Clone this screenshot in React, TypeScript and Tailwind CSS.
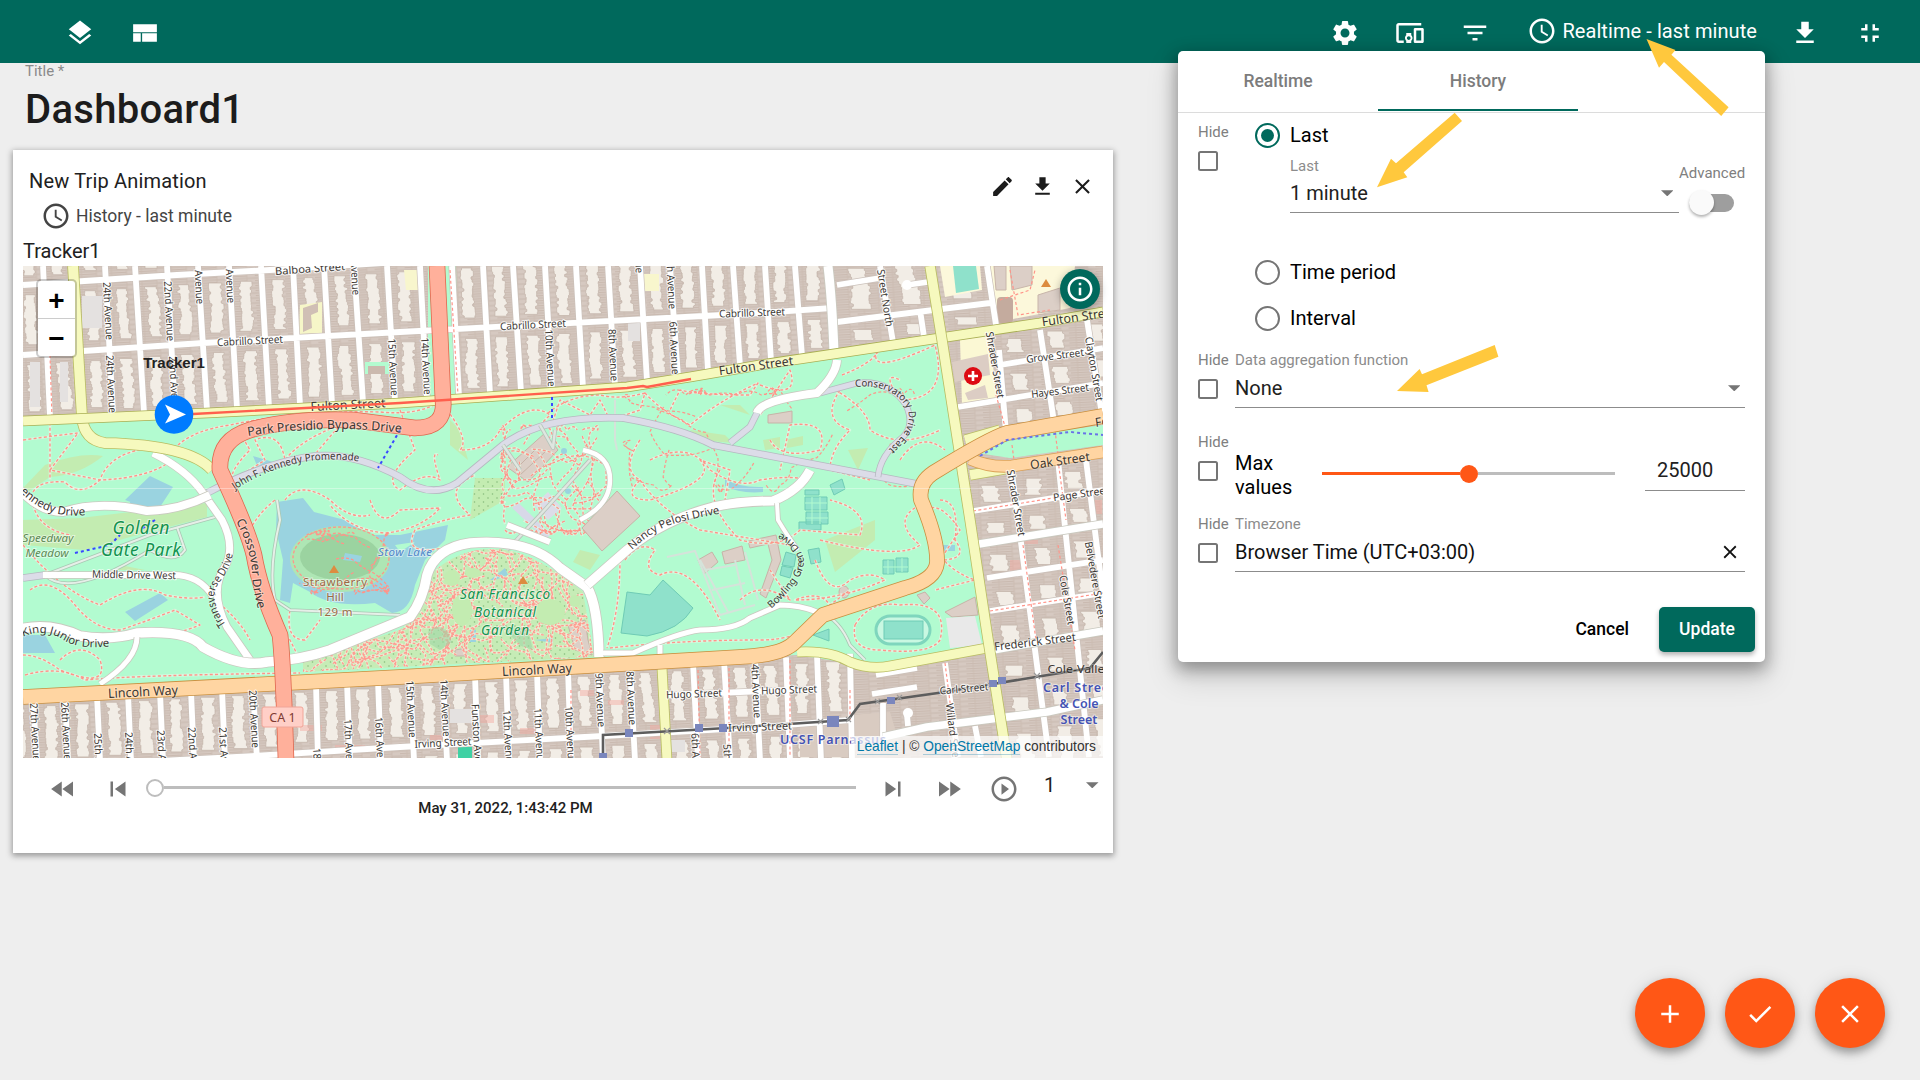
import React from 'react';

type Pt = [number, number];

/* ---------- icons ---------- */

const ICONS = {
  layers: 'M11.99 18.54l-7.37-5.73L3 14.07l9 7 9-7-1.63-1.27-7.38 5.74zM12 16l7.36-5.73L21 9l-9-7-9 7 1.63 1.27L12 16z',
  quilt: 'M2.5 5h19v6.3h-19zM2.5 12.2h6.1V19H2.5zM9.7 12.2h11.8V19H9.7z',
  settings:
    'M19.14 12.94c.04-.3.06-.61.06-.94 0-.32-.02-.64-.07-.94l2.03-1.58c.18-.14.23-.41.12-.61l-1.92-3.32c-.12-.22-.37-.29-.59-.22l-2.39.96c-.5-.38-1.03-.7-1.62-.94l-.36-2.54c-.04-.24-.24-.41-.48-.41h-3.84c-.24 0-.43.17-.47.41l-.36 2.54c-.59.24-1.13.57-1.62.94l-2.39-.96c-.22-.08-.47 0-.59.22L2.74 8.87c-.12.21-.08.47.12.61l2.03 1.58c-.05.3-.09.63-.09.94s.02.64.07.94l-2.03 1.58c-.18.14-.23.41-.12.61l1.92 3.32c.12.22.37.29.59.22l2.39-.96c.5.38 1.03.7 1.62.94l.36 2.54c.05.24.24.41.48.41h3.84c.24 0 .44-.17.47-.41l.36-2.54c.59-.24 1.13-.56 1.62-.94l2.39.96c.22.08.47 0 .59-.22l1.92-3.32c.12-.22.07-.47-.12-.61l-2.01-1.58zM12 15.6c-1.98 0-3.6-1.62-3.6-3.6s1.62-3.6 3.6-3.6 3.6 1.62 3.6 3.6-1.62 3.6-3.6 3.6z',
  devices:
    'M3 6h18V4H3c-1.1 0-2 .9-2 2v12c0 1.1.9 2 2 2h4v-2H3V6zm10 6H9v1.78c-.61.55-1 1.33-1 2.22s.39 1.67 1 2.22V20h4v-1.78c.61-.55 1-1.34 1-2.22s-.39-1.67-1-2.22V12zm-2 5.5c-.83 0-1.5-.67-1.5-1.5s.67-1.5 1.5-1.5 1.5.67 1.5 1.5-.67 1.5-1.5 1.5zM22 8h-6c-.5 0-1 .5-1 1v10c0 .5.5 1 1 1h6c.5 0 1-.5 1-1V9c0-.5-.5-1-1-1zm-1 10h-4v-8h4v8z',
  filter: 'M10 18h4v-2h-4v2zM3 6v2h18V6H3zm3 7h12v-2H6v2z',
  clock:
    'M11.99 2C6.47 2 2 6.48 2 12s4.47 10 9.99 10C17.52 22 22 17.52 22 12S17.52 2 11.99 2zM12 20c-4.42 0-8-3.58-8-8s3.58-8 8-8 8 3.58 8 8-3.58 8-8 8zm.5-13H11v6l5.25 3.15.75-1.23-4.5-2.67z',
  download: 'M19 9h-4V3H9v6H5l7 7 7-7zM5 18v2h14v-2H5z',
  downloadWide: 'M18.500 9.500h-3.300V3H9.200v6.500H5.500l6.700 7 6.300-7zM3.600 18.600v2h17v-2z',
  exit: 'M5 16h3v3h2v-5H5v2zm3-8H5v2h5V5H8v3zm6 11h2v-3h3v-2h-5v5zm2-11V5h-2v5h5V8h-3z',
  pencil:
    'M3 17.25V21h3.75L17.81 9.94l-3.75-3.75L3 17.25zM20.71 7.04c.39-.39.39-1.02 0-1.41l-2.34-2.34c-.39-.39-1.02-.39-1.41 0l-1.83 1.83 3.75 3.75 1.83-1.83z',
  close: 'M19 6.41L17.59 5 12 10.59 6.41 5 5 6.41 10.59 12 5 17.59 6.41 19 12 13.41 17.59 19 19 17.59 13.41 12z',
  info: 'M11 7h2v2h-2zm0 4h2v6h-2zm1-9C6.48 2 2 6.48 2 12s4.48 10 10 10 10-4.48 10-10S17.52 2 12 2zm0 18c-4.41 0-8-3.59-8-8s3.59-8 8-8 8 3.59 8 8-3.59 8-8 8z',
  rewind: 'M11 18V6l-8.5 6 8.5 6zm.5-6l8.5 6V6l-8.5 6z',
  prev: 'M6 6h2v12H6zm3.5 6l8.5 6V6z',
  next: 'M6 18l8.5-6L6 6v12zM16 6v12h2V6h-2z',
  forward: 'M4 18l8.5-6L4 6v12zm9-12v12l8.5-6L13 6z',
  play: 'M10 16.5l6-4.5-6-4.5v9zM12 2C6.48 2 2 6.48 2 12s4.48 10 10 10 10-4.48 10-10S17.52 2 12 2zm0 18c-4.41 0-8-3.59-8-8s3.59-8 8-8 8 3.59 8 8-3.59 8-8 8z',
  add: 'M19 13h-6v6h-2v-6H5v-2h6V5h2v6h6v2z',
  check: 'M9 16.17L4.83 12l-1.42 1.41L9 19 21 7l-1.41-1.41z',
};

function Icon({ name, size = 30, className = '' }: { name: keyof typeof ICONS; size?: number; className?: string }) {
  return (
    <svg width={size} height={size} viewBox="0 0 24 24" fill="currentColor" className={`shrink-0 ${className}`}>
      <path d={ICONS[name]} />
    </svg>
  );
}

const Caret = () => (
  <svg width="12.5" height="6.5" viewBox="0 0 10 5" className="shrink-0 text-[#757575]">
    <path d="M0 0h10L5 5z" fill="currentColor" />
  </svg>
);

/* ---------- map geometry ---------- */

function rng(seed: number) {
  let s = seed;
  return () => {
    s = (s * 1664525 + 1013904223) % 4294967296;
    return s / 4294967296;
  };
}

const lerpY = (line: Pt[], x: number) => {
  for (let i = 0; i < line.length - 1; i++) {
    const [x0, y0] = line[i];
    const [x1, y1] = line[i + 1];
    if (x <= x1 || i === line.length - 2) return y0 + ((x - x0) / (x1 - x0)) * (y1 - y0);
  }
  return 0;
};
const lerpX = (a: Pt, b: Pt, y: number) => a[0] + ((y - a[1]) / (b[1] - a[1])) * (b[0] - a[0]);

function courts(avenues: [Pt, Pt][], streets: Pt[][], seed: number) {
  const r = rng(seed);
  const out: string[] = [];
  for (let i = 0; i < avenues.length - 1; i++) {
    for (let j = 0; j < streets.length - 1; j++) {
      const mid = (avenues[i][0][0] + avenues[i + 1][0][0]) / 2;
      const top = lerpY(streets[j], mid) + 10;
      const bot = lerpY(streets[j + 1], mid) - 10;
      if (bot - top < 6) continue;
      const left: string[] = [];
      const right: string[] = [];
      let lean = 0;
      for (let y = top; y <= bot; y += 3) {
        const l = lerpX(avenues[i][0], avenues[i][1], y);
        const rr = lerpX(avenues[i + 1][0], avenues[i + 1][1], y);
        lean = Math.max(-1.2, Math.min(1.2, lean + (r() - 0.5) * 1.4));
        const c = (l + rr) / 2 + lean;
        const hw = (rr - l) * 0.17;
        const a = hw + r() * 3.2 - 1.2;
        const b = hw + r() * 3.2 - 1.2;
        left.push(`${(c - a).toFixed(1)} ${y.toFixed(1)}`);
        left.push(`${(c - a).toFixed(1)} ${(y + 2).toFixed(1)}`);
        right.unshift(`${(c + b).toFixed(1)} ${y.toFixed(1)}`);
        right.unshift(`${(c + b).toFixed(1)} ${(y + 2).toFixed(1)}`);
      }
      out.push(`M${left.join('L')}L${right.join('L')}Z`);
    }
  }
  return out.join('');
}

function trails(x: number, y: number, w: number, h: number, n: number, step: number, seed: number) {
  const r = rng(seed);
  let d = '';
  for (let i = 0; i < n; i++) {
    let px = x + r() * w;
    let py = y + r() * h;
    let a = r() * 6.28;
    d += `M${px.toFixed(1)} ${py.toFixed(1)}`;
    for (let k = 0; k < 4; k++) {
      a += (r() - 0.5) * 2.2;
      const cx = px + Math.cos(a) * step * 0.5;
      const cy = py + Math.sin(a) * step * 0.5;
      a += (r() - 0.5) * 1.4;
      px = Math.min(x + w, Math.max(x, cx + Math.cos(a) * step * 0.5));
      py = Math.min(y + h, Math.max(y, cy + Math.sin(a) * step * 0.5));
      d += `Q${cx.toFixed(1)} ${cy.toFixed(1)} ${px.toFixed(1)} ${py.toFixed(1)}`;
    }
  }
  return d;
}

const FULTON: Pt[] = [[23, 421], [207, 413], [400, 403], [627, 387], [690, 377], [760, 365], [940, 338], [1040, 323], [1103, 312]];
const LINCOLN: Pt[] = [[23, 697], [400, 677], [760, 656]];
const NORTH: [Pt, Pt][] = (
  [[12, 20], [43, 50], [73, 82], [105, 113], [135, 144], [167, 175], [198, 207], [229, 237], [261, 269], [293, 300], [324, 332], [354, 363], [387, 395], [420, 427], [452, 459], [483, 490], [513, 521], [545, 552], [576, 583], [608, 615], [640, 647], [670, 678], [702, 708], [733, 740], [765, 771], [795, 802], [828, 834]] as Pt[]
).map(([a, b]) => [[a, 266], [b, 410]] as [Pt, Pt]);
const SOUTH: [Pt, Pt][] = (
  [[2, 5], [33, 37], [65, 68], [97, 100], [128, 131], [160, 163], [191, 194], [222, 225], [253, 257], [284, 287], [316, 318], [347, 350], [378, 381], [410, 414], [443, 447], [475, 478], [506, 509], [537, 540], [568, 571], [599, 603], [630, 635], [662, 667], [693, 698], [724, 730], [755, 760], [786, 790], [817, 821], [850, 852]] as Pt[]
).map(([a, b]) => [[a, 680], [b, 757]] as [Pt, Pt]);
const EAST: [Pt, Pt][] = [
  [[942, 340], [1007, 757]],
  [[987, 290], [1049, 757]],
  [[1030, 290], [1087, 757]],
  [[1072, 290], [1128, 757]],
  [[1110, 290], [1160, 757]],
];
const NE: [Pt, Pt][] = [[[834, 266], [836, 350]], [[880, 266], [893, 342]], [[930, 266], [942, 340]], [[987, 266], [996, 325]]];

const BALBOA: Pt[] = [[23, 285], [177, 275], [270, 270], [400, 262], [840, 236]];
const CABRILLO: Pt[] = [[23, 355], [203, 343], [400, 332], [760, 313], [832, 308]];
const IRVING: Pt[] = [[23, 768], [237, 757], [400, 747], [603, 736], [760, 727], [850, 720]];

const COURTS =
  courts(NORTH, [[[23, 240], [840, 210]], BALBOA, CABRILLO, FULTON], 7) +
  courts(SOUTH, [LINCOLN, IRVING, [[23, 815], [860, 790]]], 11) +
  courts(NE, [[[834, 262], [1000, 235]], [[837, 322], [990, 303]], FULTON], 5) +
  courts(EAST.slice(1), [[[960, 337], [1103, 312]], [[960, 371], [1103, 348]], [[958, 407], [1103, 383]], [[958, 440], [1103, 417]]], 21) +
  courts(EAST, [[[960, 476], [1103, 453]], [[973, 511], [1103, 490]], [[973, 543], [1103, 523]], [[987, 578], [1103, 560]], [[990, 611], [1103, 593]], [[993, 650], [1103, 630]], [[993, 683], [1103, 668]], [[960, 724], [1103, 700]], [[960, 775], [1103, 760]]], 31);

const poly = (p: Pt[]) => 'M' + p.map((q) => q.join(' ')).join('L');

const minorStreets = [
  ...NORTH.filter((_, i) => i !== 2 && i !== 26).map(([a, b]) => `M${a[0]} ${a[1]}L${b[0]} ${lerpY(FULTON, b[0]) - 3}`),
  ...SOUTH.filter((_, i) => i !== 9 && i !== 21).map(([a, b]) => `M${a[0]} ${lerpY(LINCOLN, a[0]) + 3}L${b[0]} 760`),
  poly(BALBOA),
  poly(CABRILLO),
  poly(IRVING),
  'M667 695L817 689',
  'M837 285L880 278',
  'M837 322L990 303',
  'M907 285L928 282',
  'M880 266L893 342',
  'M920 310L924 337',
  'M987 266L996 325',
  'M999 350L1006 432',
  'M1040 330L1054 422',
  'M1087 320L1102 415',
  'M1000 365L1103 348',
  'M958 407L1103 383',
  'M1011 466L1049 757',
  'M1058 460L1089 757',
  'M1086 460L1110 650',
  'M973 511L1103 490',
  'M987 578L1103 560',
  'M990 611L1103 593',
  'M883 737L883 703',
  'M945 663L958 757',
  'M876 675L917 668',
  'M872 694L917 687',
  'M907 715L908 726',
  'M975 726L981 757',
].join('');

const RED_TRAILS = [
  'M50 355V480',
  'M23 440Q60 435 78 433L50 470L100 480Q110 450 160 447L175 455',
  'M178 445Q195 430 230 425Q300 410 380 412Q420 416 442 400',
  'M33 492Q40 480 65 482Q80 498 100 480Q150 478 172 460',
  'M33 505Q40 530 70 535',
  'M240 433L250 450Q230 470 232 480Q250 470 265 460L255 440Q280 430 285 460Q300 440 340 425L310 460',
  'M400 410L415 450Q380 480 400 490Q425 470 440 480Q430 450 438 455',
  'M447 410Q470 440 460 450Q490 450 500 430Q530 400 550 415L540 425Q500 445 470 475',
  'M23 545Q60 590 100 605Q140 580 165 595Q190 600 205 597',
  'M30 590Q50 575 75 605Q95 630 120 630Q150 620 175 610L200 625Q160 640 160 635',
  'M60 660Q80 640 100 660Q110 690 60 670Q40 655 23 655',
  'M25 675Q60 665 85 680Q140 675 300 673',
  'M285 500Q300 480 330 500Q350 520 370 515',
  'M370 500Q380 530 400 510L440 508Q420 530 385 533Q350 530 330 505',
  'M290 610Q285 640 305 640L320 620',
  'M275 500Q250 520 245 545Q265 570 268 600Q270 620 290 640L300 660',
  'M215 600Q240 620 250 640',
  'M548 413Q570 395 600 395Q620 400 645 393L640 410L610 420L600 400L590 415L560 400L550 430',
  'M645 393Q660 410 690 425Q720 400 758 383L750 395Q700 395 680 390L670 410',
  'M640 440Q620 470 640 480Q620 500 650 500Q720 480 700 460L730 470L725 500',
  'M650 460Q690 440 710 470Q740 490 760 480Q790 475 810 480',
  'M760 385Q800 400 790 370L760 415',
  'M840 390Q820 420 850 430Q830 450 830 470L870 480',
  'M835 390Q870 410 870 430Q900 450 940 430',
  'M842 375Q880 360 880 345Q860 380 935 345Q950 400 900 400Q880 370 900 380',
  'M900 460Q920 430 945 450',
  'M770 440Q780 460 820 450Q830 420 790 425L780 470',
  'M625 560Q640 540 655 550Q640 570 660 575Q690 560 720 620',
  'M620 560Q620 610 607 648',
  'M720 470Q700 500 740 540Q780 550 800 530L860 535Q870 510 830 500',
  'M640 480Q660 510 700 530Q760 540 790 545',
  'M820 540Q900 560 920 545Q890 520 920 505',
  'M815 560Q830 600 850 580Q870 570 885 580Q840 600 795 600Q820 590 830 605L850 590',
  'M855 625Q870 600 900 605Q950 600 940 640Q930 655 880 650Q850 650 855 625Z',
  'M940 500Q960 500 955 540Q970 560 940 560L960 530Q940 500 925 510',
  'M610 648Q680 640 760 640Q800 640 815 620',
  'M740 600Q760 580 790 600L770 570',
  'M455 545Q400 560 415 530Q440 520 470 515Q440 490 475 475',
  'M930 540Q945 570 975 580L935 590',
].join('');

const GARDEN_TRAILS = trails(300, 545, 300, 125, 200, 15, 13);
const CONCOURSE_TRAILS = trails(505, 430, 108, 100, 36, 20, 77);

const labelsStraight: [string, number, number, number, number, number?][] = [
  ['24th Avenue', 108, 311, 87, 58], ['24th Avenue', 111, 384, 87, 58], ['22nd Avenue', 169, 311, 87, 60], ['22nd Avenue', 174, 386, 87, 60],
  ['Avenue', 199, 287, 87, 34], ['Avenue', 230, 286, 87, 34], ['Avenue', 355, 278, 87, 34], ['15th Avenue', 393, 367, 87, 57],
  ['14th Avenue', 426, 366, 87, 57], ['10th Avenue', 550, 358, 87, 57], ['8th Avenue', 613, 355, 87, 52], ['6th Avenue', 674, 348, 87, 53],
  ['6th Avenue', 671, 283, 87, 52], ['8th Avenue', 638, 247, 87, 52],
  ['Cabrillo Street', 250, 341, -3, 66], ['Cabrillo Street', 533, 325, -3, 66], ['Cabrillo Street', 752, 313, -2, 66], ['Balboa Street', 310, 269, -4, 70],
  ['27th Avenue', 35, 732, 87, 58], ['26th Avenue', 66, 731, 87, 58], ['25th Avenue', 99, 763, 87, 60], ['24th Avenue', 130, 762, 87, 60],
  ['23rd Avenue', 162, 760, 87, 60], ['22nd Avenue', 193, 757, 87, 60], ['21st Avenue', 224, 757, 87, 60], ['20th Avenue', 254, 719, 87, 58],
  ['18th Avenue', 318, 777, 87, 58], ['17th Avenue', 349, 748, 87, 58], ['16th Avenue', 380, 746, 87, 58], ['15th Avenue', 411, 709, 87, 57],
  ['14th Avenue', 445, 708, 87, 57], ['Funston Avenue', 477, 742, 87, 76], ['12th Avenue', 508, 739, 87, 58], ['11th Avenue', 539, 737, 87, 58],
  ['10th Avenue', 570, 735, 87, 58], ['9th Avenue', 600, 700, 87, 54], ['8th Avenue', 631, 698, 87, 54], ['6th Avenue', 696, 760, 87, 54],
  ['5th Avenue', 728, 771, 87, 54], ['4th Avenue', 756, 691, 87, 54],
  ['Hugo Street', 694, 694, -2, 56], ['Hugo Street', 789, 690, -2, 56], ['Irving Street', 443, 743, -3, 57], ['Irving Street', 760, 727, -2, 64],
  ['Street North', 885, 298, 81, 58], ['Shrader Street', 995, 365, 80, 67], ['Shrader Street', 1016, 503, 80, 67], ['Grove Street', 1055, 356, -7, 58],
  ['Hayes Street', 1060, 391, -7, 58], ['Clayton Street', 1094, 369, 80, 65], ['Page Street', 1081, 494, -8, 56], ['Belvedere Street', 1095, 580, 80, 78],
  ['Cole Street', 1067, 600, 80, 50], ['Frederick Street', 1035, 642, -7, 82, 11.5], ['Cole-Valley', 1079, 669, 0, 63, 11.5], ['Carl Street', 964, 689, -5, 49],
  ['Willard Street', 953, 735, 83, 64], ['Middle Drive West', 134, 575, 1, 84],
  ['Fulton Street', 348, 405, -3, 75, 12.5], ['Fulton Street', 756, 366, -8, 75, 12.5], ['Fulton Street', 1079, 317, -8, 75, 12.5], ['Oak Street', 1060, 461, -8, 60, 12.5],
  ['Fell Street', 1123, 419, -8, 56, 12.5], ['Lincoln Way', 143, 692, -3, 70, 13], ['Lincoln Way', 537, 670, -3, 70, 13],
];

const labelsCurved: [string, string, number, number][] = [
  ['Park Presidio Bypass Drive', 'M248 436Q280 431 310 430Q350 427 404 433', 12.5, 154],
  ['John F. Kennedy Promenade', 'M235 490Q262 471 303 462Q335 457 362 462', 10.5, 130],
  ['ennedy Drive', 'M20 492Q50 522 92 514', 11.5, 72],
  ['Transverse Drive', 'M226 625Q207 597 219 583Q233 565 234 545', 11, 78],
  ['Crossover Drive', 'M236 521Q249 545 252 570Q252 590 260 616', 12, 92],
  ['King Junior Drive', 'M23 637Q45 627 65 641Q80 650 114 646', 11, 90],
  ['Nancy Pelosi Drive', 'M632 550Q655 528 680 522Q700 517 724 513', 11, 97],
  ['Bowling Green Drive', 'M771 609Q803 580 804 562Q802 542 774 530', 10, 98],
  ['Conservatory Drive East', 'M855 387Q893 383 908 410Q914 432 880 456', 10, 108],
];

type Road = { d: string; w: number; c: string; e: string };
const WHITE = { c: '#ffffff', e: '#c9c9bf' };
const GREY = { c: '#dcdce8', e: '#b5b9c0' };
const ROADS: Road[] = [
  { d: 'M207 493Q260 465 307 457Q350 450 400 477Q430 500 457 483L503 445Q543 415 623 418Q680 428 713 445L917 484', w: 6, ...GREY },
  { d: 'M820 393L857 383Q890 380 906 405Q915 425 903 437Q880 455 878 477', w: 5, ...GREY },
  { d: 'M757 413L750 427L730 443', w: 5.5, ...GREY },
  { d: 'M23 578L45 575', w: 6, ...GREY },
  { d: 'M503 445L520 470M507 550L540 515L590 460M555 430L553 448L540 425', w: 2.5, c: '#dfe6e0', e: '#b7c4bb' },
  { d: 'M277 500L280 520Q268 570 275 600L290 610L400 615', w: 2, c: '#e6efe8', e: '#a9c8b4' },
  { d: 'M177 527L185 550Q175 565 150 550Q70 600 45 575L150 535L215 517', w: 2, c: '#e6efe8', e: '#a9c8b4' },
  { d: 'M820 612Q840 620 850 645L865 660', w: 2, c: '#e6efe8', e: '#a9c8b4' },
  { d: 'M507 525L550 542', w: 6, ...WHITE },
  { d: 'M583 450Q610 455 610 480Q610 505 580 520', w: 4.5, ...WHITE },
  { d: 'M153 453Q187 470 203 493L222 520Q235 545 226 565Q208 590 227 627L250 660', w: 7, ...WHITE },
  { d: 'M43 575H173Q200 575 213 597', w: 6, ...WHITE },
  { d: 'M20 490Q40 512 63 512Q100 500 147 511Q180 510 210 495', w: 8, ...WHITE },
  { d: 'M20 629Q50 622 80 636Q110 641 137 633Q190 630 203 647Q240 668 267 662Q300 660 330 650L410 617Q423 600 427 575Q435 548 470 543Q530 538 560 568L587 587Q598 605 599 657', w: 9.5, ...WHITE },
  { d: 'M137 637Q137 660 100 684', w: 5, ...WHITE },
  { d: 'M587 585L627 550Q663 520 713 507Q740 501 773 501Q800 490 810 470', w: 9, ...WHITE },
  { d: 'M777 503L778 520Q790 540 798 550', w: 4, ...WHITE },
  { d: 'M603 653L633 653Q680 632 700 630Q735 630 750 618L780 605Q800 605 817 612M660 645V660', w: 5, ...WHITE },
  { d: 'M837 360Q836 375 817 393Q760 400 757 413', w: 8, ...WHITE },
  { d: 'M828 266Q832 300 834 352', w: 9, ...WHITE },
  { d: 'M973 545L1103 524M993 650L1103 631M883 737L927 727L1047 712L1103 700', w: 7.5, ...WHITE },
  { d: 'M797 652Q830 650 850 662Q870 670 890 666L987 648M662 668L667 760', w: 9, c: '#f6f9be', e: '#b9bd62' },
  { d: 'M73 266L82 417Q84 440 105 443Q190 445 212 470', w: 10, c: '#f6f9be', e: '#b9bd62' },
  { d: poly(FULTON), w: 9, c: '#f6f9be', e: '#a9ae52' },
  { d: 'M930 266L942 340L970 520L987 633L1007 760M965 440L1000 430M970 475L1010 468', w: 9.5, c: '#f6f9be', e: '#b9bd62' },
  { d: 'M970 459Q990 468 1012 466L1103 452', w: 11, c: '#ffd5a2', e: '#dba056' },
  { d: 'M1103 416L1007 433Q990 438 933 473Q918 483 921 500Q938 540 937 563Q935 580 905 588L823 615L795 642Q783 655 740 657L400 677L23 697', w: 14, c: '#ffd5a2', e: '#c98f3e' },
  { d: 'M437 266L443 400Q446 428 415 428L353 420Q290 418 250 430Q218 440 220 470Q248 530 254 555Q260 590 280 635Q283 660 286 760', w: 15, c: '#ffb09b', e: '#e0684f' },
];

const PARK = 'M23 421L207 413L400 403L627 387L690 377L760 365L940 338L970 520L987 650L880 668L797 655L400 677L23 697Z';
const GARDEN = 'M433 572Q460 548 495 549Q530 549 583 592L594 657L303 672V662L400 630Q425 612 433 572Z';

function MapCanvas() {
  return (
    <svg className="block" width="1080" height="492" viewBox="23 266 1080 492" fontFamily="'Noto Sans', sans-serif">
      <defs>
        <pattern id="houses" width="30" height="5" patternUnits="userSpaceOnUse" patternTransform="rotate(-3)">
          <rect width="30" height="5" fill="#d6c9c1" />
          <path d="M0 1h30M0 3.6h22" stroke="#c5b5aa" strokeWidth=".8" />
          <path d="M7 0v5M22 0v5" stroke="#cdbdb3" strokeWidth="1" />
        </pattern>
        <pattern id="dots" width="9" height="8" patternUnits="userSpaceOnUse">
          <circle cx="2" cy="2" r=".8" fill="#86bb7a" />
          <circle cx="6.5" cy="6" r=".8" fill="#86bb7a" />
        </pattern>
        <clipPath id="park"><path d={PARK} /></clipPath>
        <clipPath id="garden"><path d={GARDEN} /></clipPath>
      </defs>
      <rect x="23" y="266" width="1080" height="492" fill="url(#houses)" />
      <path d={COURTS} fill="#f2ede6" stroke="#c2b2a8" strokeWidth=".7" />
      <g fill="#f3a9a0" opacity=".45">
        <path d="M300 725h22v6h-22zM335 745h30v5h-30zM430 735h20v5h-20zM480 715h14v8h-14zM520 728h20v6h-20zM580 690h14v6h-14zM608 700h16v5h-16zM650 725h10v14h-10zM1018 540h20v4h-20zM1010 560h16v12h-16zM1090 500h12v14h-12zM940 740h12v12h-12z" />
      </g>
      <path d="M960 340L990 335L995 385L1000 400L962 405Z" fill="#fbf8d4" />
      <path d="M952 362L988 354L990 375L955 382ZM965 393L985 385L988 398L968 400Z" fill="#dccdc4" />
      <path d="M990 266H1075L1070 308L998 322Z" fill="#fcf8db" />
      <path d="M994 266H1006V290H996ZM1010 266H1032V285L1012 290ZM1038 295L1060 288L1060 310L1038 313Z" fill="#dccfc7" stroke="#c8b5aa" />
      <rect x="997" y="297" width="16" height="26" rx="4" fill="#c4ab9e" />
      <path d="M940 266H980L982 290L945 297Z" fill="#fcf8db" />
      <path d="M953 266H976L979 289L956 293Z" fill="#8fe1cb" />
      <path d="M300 305L322 302V333L299 334Z" fill="#f6f6c8" />
      <path d="M303 308L318 303V312L311 315L312 328L303 332Z" fill="#d0bfb5" />
      <path d="M644 274h15v17h-15zM404 270h14v20h-12z" fill="#f8f6cd" />
      <path d="M365 362h24v12h-24z" fill="#b3fbd0" />
      <path d="M368 366h17v8h-17z" fill="#cbb9ae" />
      <path d="M82 296h20v32h-20zM450 709h22v14h-22zM628 323h12v18h-12zM665 740h20v12h-20zM30 362h10v45h-10zM60 362h8v40h-8z" fill="#e4e1e0" />
      <path d="M458 745h14v14h-14z" fill="#3fd1a4" />
      <path d="M850 715L890 712L900 745L850 757H800V725Z" fill="#d9cbc1" />

      <path d={PARK} fill="#b2fbd0" />
      <path d="M958 450L1007 438L1103 425V445L1010 458Z" fill="#b2fbd0" />
      <path d="M428 266h28L459 400H428z" fill="#b2fbd0" />

      <g clipPath="url(#park)">
        <path d="M23 488L45 465Q80 452 103 456Q80 475 50 477L23 495ZM23 520L80 518L207 503V517L130 537L85 550L23 545Z" fill="#c3ecb1" />
        <path d="M120 565L145 570H115ZM825 540L875 520V540L835 572ZM848 450L868 448L858 470ZM763 440L780 437V448L765 450ZM785 440L803 436V445L787 448ZM690 430L725 435L733 443L700 440ZM720 405L750 415L740 405ZM450 420L460 430L468 460L450 445ZM475 478H505V500L470 520ZM580 550L600 555L590 570L573 562Z" fill="#c3ecb1" />
        <path d={GARDEN} fill="#c6ecb6" />
        <path d={`${GARDEN}M475 478H505V500L470 520Z`} fill="url(#dots)" />
        <path d="M277 502L303 498L314 512L345 520L370 535L400 535L448 525L445 540L425 560L415 585Q410 612 392 613L375 603Q330 608 310 592L293 583L290 603L280 600L283 560L276 530Z" fill="#9ad3e0" />
        <ellipse cx="340" cy="559" rx="50" ry="33" fill="#aee6b4" />
        <ellipse cx="340" cy="557" rx="40" ry="23" fill="#9bd3a0" />
        <path d="M395 545L415 542L400 552Z" fill="#b2fbd0" />
        <path d="M125 500L150 476L173 487L160 507H145ZM125 612L160 593L168 600L135 621ZM23 635H45L55 653H23ZM130 500L165 508L130 509ZM345 553L362 556L360 562L343 560ZM725 479Q740 488 763 487V492Q740 494 725 486ZM490 580L505 568L508 575L495 580ZM470 630h6v12h-6zM535 640l18-2v5zM253 456l20 6-15 6zM943 545h12v6h-12z" fill="#9ad3e0" />
        <g fill="#8fe1cb" stroke="#6fcbb5" strokeWidth="1">
          <path d="M627 592L650 595L663 580L693 608Q680 630 647 636L621 633Z" />
          <path d="M805 497h22v13h-22zM806 512h22v12h-22zM805 490h14v5h-14zM830 485l12-6 3 10-11 6zM799 522h22v8h-22zM786 552l10 3-2 12-12-2zM782 566l11 2-3 10-10-3zM808 550l11-2 2 14-10 2zM883 560h11v14h-11zM896 558h12v14h-12zM813 635l16-6v12z" />
          <path d="M812 497v27M820 497v27M805 503h22M806 518h22M888 560v14M902 558v14M883 567h25" fill="none" stroke="#b2fbd0" />
        </g>
        <rect x="876" y="616" width="54" height="28" rx="14" fill="#c9f8e2" stroke="#7fd6bd" strokeWidth="3" />
        <rect x="884" y="621" width="39" height="18" fill="#8fe1cb" stroke="#6fcbb5" />
        <g fill="#dccfc7" stroke="#c6b3a7" strokeWidth="1">
          <path d="M545 433L558 450L528 482L507 467Z M515 470L535 450M520 475L545 452" />
          <path d="M568 625L585 620L588 640L592 655L575 650Z M455 650l12-2v8h-12z" />
          <path d="M698 560l14-8 6 10-14 12zM722 552l20-6 3 14-20 4zM768 415l24-4v12h-24z" />
          <path d="M748 541L776 535L781 560L766 598L760 594L772 560L768 544L750 548Z" />
          <path d="M945 612L975 597L978 615L952 617ZM917 595l8-3 5 6-6 6z" />
          <ellipse cx="844" cy="592" rx="5" ry="6" />
        </g>
        <path d="M946 618L975 616L982 645L950 648Z" fill="#e9e9e9" />
        <g fill="none" stroke="#d5e3da" strokeWidth="2">
          <path d="M667 557L695 551L720 615L755 605M705 570L735 565M712 590L745 583M700 560L728 612M735 560L745 605M745 552L758 600" />
          <path d="M615 420V440L617 450M550 425V440M615 400V418" />
        </g>
        <path d="M515 505L548 537" stroke="#d8d8e8" strokeWidth="8" />
        <path d="M534 505L548 492L562 508L548 520Z" fill="#dcdce8" />
        <g fill="none" strokeLinejoin="round">
          <path d={RED_TRAILS} stroke="#e2f7e4" strokeWidth="2.6" opacity=".8" />
          <path d={RED_TRAILS} stroke="#ff9489" strokeWidth="1.4" strokeDasharray="3 2.2" />
          <path d={CONCOURSE_TRAILS} stroke="#e2f7e4" strokeWidth="2.4" opacity=".7" />
          <path d={CONCOURSE_TRAILS} stroke="#ff9489" strokeWidth="1.3" strokeDasharray="3 2" />
          <path d={trails(300, 535, 85, 55, 12, 18, 9)} stroke="#ff9489" strokeWidth="1.3" strokeDasharray="3 2" />
          <path d={trails(630, 395, 290, 90, 12, 28, 19)} stroke="#ff9489" strokeWidth="1.2" strokeDasharray="3 2.2" />
          <ellipse cx="341" cy="558" rx="48" ry="31" stroke="#ff9489" strokeWidth="1.3" strokeDasharray="3 2" />
          <g clipPath="url(#garden)">
            <path d={GARDEN_TRAILS} stroke="#f1efd9" strokeWidth="2.4" opacity=".8" />
            <path d={GARDEN_TRAILS} stroke="#ff9b90" strokeWidth="1.4" strokeDasharray="2.6 1.8" />
          </g>
        </g>
        <path d="M617 491L640 516L602 551L582 528Z" fill="#dccfc7" stroke="#c6b3a7" />
        <circle cx="568" cy="491" r="3" fill="#9ad3e0" />
        <circle cx="564" cy="451" r="3" fill="#9ad3e0" />
        <ellipse cx="550" cy="612" rx="15" ry="13" fill="#c3ecb1" />
        <ellipse cx="575" cy="601" rx="6" ry="6" fill="#c3ecb1" />
        <ellipse cx="452" cy="578" rx="8" ry="8" fill="#c3ecb1" />
        <ellipse cx="473" cy="573" rx="8" ry="5" fill="#c3ecb1" />
        <ellipse cx="462" cy="610" rx="10" ry="16" fill="#c3ecb1" />
        <path d="M428 632q10-10 20 0l4 10-12 8-10-6zM500 625l28 5 5 20-12-4z" fill="#9ed7a5" opacity=".6" />
      </g>

      <path d={minorStreets} fill="none" stroke="#cbc1ba" strokeWidth="7.2" />
      <path d={minorStreets} fill="none" stroke="#ffffff" strokeWidth="5.8" />
      <circle cx="907" cy="285" r="5" fill="#fff" />
      <circle cx="908" cy="713" r="5" fill="#fff" />
      <path d="M50 355L52 418M973 511L1103 490M990 611L1103 593M1058 460L1066 520M698 670L700 757M729 668V757M571 690V757M945 663L957 757M450 270L458 395M850 690V720M790 660V757M996 395L1006 430M1010 270L1018 315L1050 310M1000 300L1030 290L1035 270M1055 430L1058 455M1012 445L1014 460M1023 545L1036 640M1058 545L1075 650" fill="none" stroke="#ff9489" strokeWidth="1.2" strokeDasharray="3 2.4" />

      {ROADS.map((r, i) => (
        <g key={i} fill="none" strokeLinejoin="round">
          <path d={r.d} stroke={r.e} strokeWidth={r.w + 1.6} />
          <path d={r.d} stroke={r.c} strokeWidth={r.w} />
        </g>
      ))}
      <path d="M552 397V420M400 430L378 468M75 553L110 545L120 535M155 520L140 530" fill="none" stroke="#3a48ff" strokeWidth="2" strokeDasharray="3 3" />
      <path d="M980 456L1007 440L1070 432L1103 435" fill="none" stroke="#6a72e8" strokeWidth="2" strokeDasharray="3 3" />

      <path d="M603 758V735L727 728L848 720L860 704L938 693L1048 675L1090 668L1103 652" fill="none" stroke="#5d5d5d" strokeWidth="2.6" />
      <g fill="#7a86bd">
        <path d="M625 729h8v8h-8zM695 724h8v8h-8zM719 724h8v8h-8zM827 716h12v11h-12zM887 697h8v7h-8zM989 680h8v7h-8zM998 677h8v7h-8zM599 753h8v7h-8z" />
      </g>
      <path d="M664 728l6 6m0-6l-6 6M818 719l5 5m0-5l-5 5M846 717l5 5m0-5l-5 5M875 699l5 5m0-5l-5 5M897 695l5 5m0-5l-5 5M1034 673l6 6m0-6l-6 6" stroke="#9a9a9a" strokeWidth="1.2" />

      <g fontSize="10.5" fill="#3b3733" stroke="#ffffff" strokeOpacity=".75" strokeWidth="2.2" paintOrder="stroke" strokeLinejoin="round">
        {labelsStraight.map(([t, x, y, rot, len, size], i) => (
          <text key={i} x={x} y={y + (size ?? 10.5) * 0.33} transform={`rotate(${rot} ${x} ${y})`} textAnchor="middle" textLength={len} lengthAdjust="spacingAndGlyphs" fontSize={size ?? 10.5} strokeOpacity={size ? 0.25 : 0.75}>
            {t}
          </text>
        ))}
        {labelsCurved.map(([t, d, size, len], i) => (
          <g key={i}>
            <path id={`lane${i}`} d={d} fill="none" stroke="none" />
            <text fontSize={size} strokeOpacity=".3" textLength={len} lengthAdjust="spacingAndGlyphs">
              <textPath href={`#lane${i}`}>{t}</textPath>
            </text>
          </g>
        ))}
      </g>

      <g textAnchor="middle" stroke="#ffffff" strokeOpacity=".5" strokeWidth="2" paintOrder="stroke">
        <g fontStyle="italic" fill="#12924f">
          <text x="141" y="534" fontSize="17.5" textLength="57">Golden</text>
          <text x="141" y="556" fontSize="17.5" textLength="80">Gate Park</text>
          <g fontSize="13.5">
            <text x="505" y="599" textLength="90">San Francisco</text>
            <text x="505" y="617" textLength="62">Botanical</text>
            <text x="505" y="635" textLength="48">Garden</text>
          </g>
        </g>
        <g fontStyle="italic" fill="#5e8a55" fontSize="11.5">
          <text x="48" y="542">Speedway</text>
          <text x="47" y="557">Meadow</text>
        </g>
        <text x="405" y="556" fontStyle="italic" fontSize="11.5" fill="#4f86c9" textLength="54">Stow Lake</text>
        <g fill="#9a6b47" fontSize="11.5">
          <text x="335" y="586" textLength="64">Strawberry</text>
          <text x="335" y="601">Hill</text>
          <text x="335" y="616" textLength="35">129 m</text>
        </g>
        <g fill="#4453b4" fontWeight="600" fontSize="12.5">
          <text x="833" y="744" textLength="106">UCSF Parnassus</text>
          <text x="1079" y="692" textLength="72">Carl Street</text>
          <text x="1079" y="708">&amp; Cole</text>
          <text x="1079" y="724">Street</text>
        </g>
      </g>
      <path d="M334 565l5 8h-10zM523 576l5 8h-10zM1046 279l5 8h-10z" fill="#dc8c40" />
      <rect x="262" y="707" width="41" height="20" rx="2" fill="#ffcfc7" stroke="#f0a598" />
      <text x="282.5" y="721.5" textAnchor="middle" fontSize="12.5" fill="#7e3a32">CA 1</text>
      <circle cx="973" cy="376" r="9" fill="#dd0a12" />
      <path d="M968 376h10M973 371v10" stroke="#fff" strokeWidth="2.6" />

      <path d="M193 414L400 403L627 388L643 386L647 387L691 379" fill="none" stroke="#ff5f4d" strokeWidth="2.4" />
      <circle cx="174" cy="414.500" r="19.300" fill="#007bff" />
      <path d="M165 404.500L186 414.500L165 423.500L170 414.500Z" fill="#fff" />
      <text x="174" y="368" textAnchor="middle" fontFamily="'Liberation Sans', Arial, sans-serif" fontWeight="700" fontSize="15" fill="#222">Tracker1</text>
      <path d="M23 488.5H1103" stroke="#fff" strokeOpacity=".35" />
    </svg>
  );
}

/* ---------- widget ---------- */

function TripWidget() {
  return (
    <section className="ml-[13px] flex h-[703px] w-[1100px] flex-col bg-white px-[10px] shadow-[0_2px_6px_1px_rgba(0,0,0,0.36)]">
      <div className="flex h-[83px] justify-between pt-[16px] pl-[6px]">
        <div className="flex flex-col">
          <span className="text-[20px] leading-[30px] tracking-[0.17px] text-[#212121]">New Trip Animation</span>
          <span className="mt-[5px] flex items-center gap-[5px] pl-[12px] text-[17.5px] leading-[30px] text-[#444]">
            <Icon name="clock" />
            History - last minute
          </span>
        </div>
        <div className="flex h-[40px] items-center gap-[15px] pr-[8px] text-[#1c1c1c]">
          <Icon name="pencil" size={25} />
          <Icon name="download" size={25} />
          <Icon name="close" size={25} />
        </div>
      </div>
      <div className="h-[33px] text-[20px] leading-[36px] text-[#212121]">Tracker1</div>
      <div className="relative h-[492px]">
        <MapCanvas />
        <div className="absolute top-[13px] left-[13px] flex w-[41px] flex-col rounded-[5px] border-2 border-black/20 bg-white bg-clip-padding text-center font-['Liberation_Sans',Arial,sans-serif] text-[28px] font-bold text-black">
          <span className="h-[38px] border-b border-[#ccc] leading-[39px]">+</span>
          <span className="h-[37px] leading-[39px]">−</span>
        </div>
        <div className="absolute top-[3px] right-[3px] flex h-10 w-10 items-center justify-center rounded-full bg-[#00695c] text-white shadow-[0_2px_8px_rgba(0,0,0,0.3)]">
          <Icon name="info" />
        </div>
        <div className="absolute right-0 bottom-0 h-[22px] bg-white/70 pr-[7px] pl-[6px] font-['Liberation_Sans',Arial,sans-serif] text-[13.75px] leading-[22px] whitespace-nowrap text-[#333]">
          <span className="border-b border-[#0078a8]/30 text-[#0078a8]">Leaflet</span> | ©{' '}
          <span className="border-b border-[#0078a8]/30 text-[#0078a8]">OpenStreetMap</span> contributors
        </div>
      </div>
      <div className="flex h-[62px] items-center text-[#757575]">
        <Icon name="rewind" className="ml-[25px]" />
        <Icon name="prev" className="ml-[25px]" />
        <div className="mt-[-3px] ml-[13px] flex w-[710px] items-center">
          <span className="h-[18px] w-[18px] rounded-full border-[2.5px] border-[#bdbdbd] bg-white" />
          <span className="h-[2.5px] flex-1 bg-[#bdbdbd]" />
        </div>
        <Icon name="next" className="ml-[22px]" />
        <Icon name="forward" className="ml-[26px]" />
        <Icon name="play" className="ml-[25px]" />
        <span className="mt-[-8px] ml-[25px] text-[20px] text-[#212121]">1</span>
        <span className="mt-[-8px] ml-[31px] flex">
          <Caret />
        </span>
      </div>
      <div className="mt-[-22px] w-[965px] text-center text-[15px] leading-[20px] font-medium text-[#212121]">May 31, 2022, 1:43:42 PM</div>
    </section>
  );
}

/* ---------- timewindow panel ---------- */

function HideBox() {
  return (
    <div className="flex w-[37px] shrink-0 flex-col text-[15px] leading-[18px] text-[#808080]">
      Hide
      <span className="mt-[10px] h-5 w-5 rounded-[2.5px] border-[2.5px] border-[#757575]" />
    </div>
  );
}

function Radio({ label, on = false }: { label: string; on?: boolean }) {
  return (
    <div className="flex h-[25px] items-center gap-[10px] text-[20px] leading-[25px] text-black">
      {on ? (
        <span className="flex h-[25px] w-[25px] items-center justify-center rounded-full border-[2.5px] border-[#00695c]">
          <span className="h-[13px] w-[13px] rounded-full bg-[#00695c]" />
        </span>
      ) : (
        <span className="h-[25px] w-[25px] rounded-full border-[2.5px] border-[#757575]" />
      )}
      {label}
    </div>
  );
}

function TimewindowPanel() {
  return (
    <div className="absolute top-[51px] left-[1178px] flex h-[611px] w-[587px] flex-col rounded-[5px] bg-white shadow-[0_6px_16px_2px_rgba(0,0,0,0.32),0_14px_30px_4px_rgba(0,0,0,0.12)]">
      <div className="flex h-[62px] shrink-0 border-b border-[#dcdcdc] text-center text-[17.5px] leading-[60px] font-medium text-[#7c7c7c]">
        <span className="w-[200px]">Realtime</span>
        <span className="h-[60px] w-[200px] border-b-[2.5px] border-[#00695c]">History</span>
      </div>
      <div className="flex h-[227px] shrink-0 pt-[10px] pl-[20px]">
        <HideBox />
        <div className="ml-[20px] flex flex-col">
          <Radio label="Last" on />
          <div className="flex h-[88px] pl-[35px]">
            <div className="h-[65px] w-[389px] border-b border-[#8c8c8c] pt-[9px]">
              <div className="text-[15px] leading-[18px] text-[#8c8c8c]">Last</div>
              <div className="mt-[5px] flex items-center justify-between pr-[6px] text-[20px] leading-[26px] text-[#212121]">
                1 minute
                <Caret />
              </div>
            </div>
            <div className="flex w-[66px] flex-col pt-[16px]">
              <span className="text-[15px] leading-[18px] text-[#808080]">Advanced</span>
              <span className="mt-[8px] ml-[10px] flex h-[25px] items-center">
                <span className="relative z-10 h-[25px] w-[25px] rounded-full bg-[#fafafa] shadow-[0_2px_3px_rgba(0,0,0,0.3)]" />
                <span className="ml-[-25px] h-[18px] w-[45px] rounded-full bg-[#9e9e9e]" />
              </span>
            </div>
          </div>
          <div className="mt-[24px] flex flex-col gap-[21px]">
            <Radio label="Time period" />
            <Radio label="Interval" />
          </div>
        </div>
      </div>
      <div className="flex h-[82px] shrink-0 pt-[11px] pl-[20px]">
        <HideBox />
        <div className="h-[57px] w-[510px] border-b border-[#8c8c8c]">
          <div className="text-[15px] leading-[18px] text-[#8c8c8c]">Data aggregation function</div>
          <div className="mt-[6px] flex items-center justify-between pr-[5px] text-[20px] leading-[26px] text-[#212121]">
            None
            <Caret />
          </div>
        </div>
      </div>
      <div className="flex h-[82px] shrink-0 pt-[11px] pl-[20px]">
        <HideBox />
        <div className="flex w-[510px] pt-[18px] text-[20px] leading-[24px] text-black">
          <span className="w-[87px] pr-[20px]">Max values</span>
          <span className="flex h-[45px] w-[293px] items-center">
            <span className="h-[3px] w-[138px] bg-[#ff5716]" />
            <span className="h-[18px] w-[18px] rounded-full bg-[#ff5716]" />
            <span className="h-[3px] flex-1 bg-[#bdbdbd]" />
          </span>
          <span className="ml-[30px] h-[40px] w-[100px] border-b border-[#8c8c8c] pt-[7px] pl-[12px] text-[#212121]">25000</span>
        </div>
      </div>
      <div className="flex h-[103px] shrink-0 pt-[11px] pl-[20px]">
        <HideBox />
        <div className="h-[57px] w-[510px] border-b border-[#8c8c8c]">
          <div className="text-[15px] leading-[18px] text-[#8c8c8c]">Timezone</div>
          <div className="mt-[6px] flex items-center justify-between pr-[4px] text-[20px] leading-[26px] text-[#111]">
            Browser Time (UTC+03:00)
            <Icon name="close" size={22} />
          </div>
        </div>
      </div>
      <div className="flex h-[45px] shrink-0 items-center justify-end pr-[10px] text-[17.5px] font-medium">
        <span className="mr-[30px] text-black">Cancel</span>
        <span className="flex h-[45px] w-[96px] items-center justify-center rounded-[5px] bg-[#00695c] text-white shadow-[0_3px_5px_rgba(0,0,0,0.3)]">Update</span>
      </div>
    </div>
  );
}

function Fab({ name }: { name: keyof typeof ICONS }) {
  return (
    <span className="flex h-[70px] w-[70px] items-center justify-center rounded-full bg-[#ff5716] pt-[1px] text-white shadow-[0_5px_8px_rgba(0,0,0,0.3),0_2px_18px_rgba(0,0,0,0.12)]">
      <Icon name={name} />
    </span>
  );
}

export default function App() {
  return (
    <div className="relative h-[1080px] w-[1920px] overflow-hidden bg-[#eeeeee] font-[Roboto,sans-serif]">
      <header className="flex h-[63px] items-center justify-between bg-[#00695c] text-white">
        <div className="flex gap-[35px] pt-[2px] pl-[65px]">
          <Icon name="layers" />
          <Icon name="quilt" />
        </div>
        <div className="flex items-center pr-[35px]">
          <Icon name="settings" className="mt-[2px] mr-[35px]" />
          <Icon name="devices" className="mt-[2px] mr-[35px]" />
          <Icon name="filter" className="mt-[2px] mr-[37px]" />
          <span className="mt-[-1px] mr-[33px] flex items-center gap-[5px] text-[20px] leading-[24px] tracking-[0.08px] whitespace-nowrap">
            <Icon name="clock" />
            Realtime - last minute
          </span>
          <Icon name="download" className="mt-[2px] mr-[35px]" />
          <Icon name="exit" className="mt-[2px]" />
        </div>
      </header>
      <main>
        <div className="flex h-[87px] flex-col pl-[25px]">
          <span className="text-[15px] leading-[17px] text-[#8a8a8a]">Title *</span>
          <span className="mt-[6px] text-[40px] leading-[48px] font-medium tracking-[0.3px] text-[#1c1c1c]">Dashboard1</span>
        </div>
        <TripWidget />
      </main>
      <TimewindowPanel />
      <svg className="pointer-events-none absolute top-0 left-0" width="1920" height="420" fill="#ffc83d">
        <path d="M1646.5 39L1675.5 50L1671.4 54.7L1728.6 107.3L1721.2 116L1664 62L1659 67.7Z" />
        <path d="M1377 187.3L1391 158.7L1396 163.3L1454.7 112.7L1462 121L1403.7 172.3L1407.3 177.3Z" />
        <path d="M1397 391L1419.6 369L1422 374.3L1494.7 345L1498.4 356.7L1426.5 385.3L1428.6 392Z" />
      </svg>
      <div className="absolute right-[35px] bottom-[32px] flex gap-[20px]">
        <Fab name="add" />
        <Fab name="check" />
        <Fab name="close" />
      </div>
    </div>
  );
}
